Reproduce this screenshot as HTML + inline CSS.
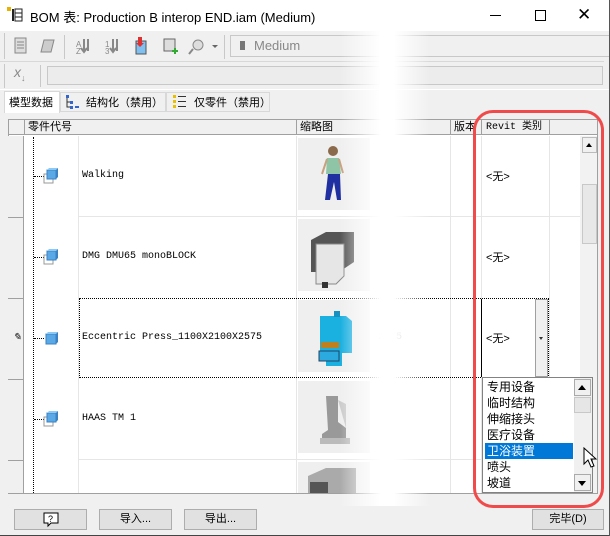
<!DOCTYPE html>
<html><head><meta charset="utf-8"><style>
*{margin:0;padding:0;box-sizing:border-box}
body{width:610px;height:536px;overflow:hidden;background:#f0f0f0;font-family:"Liberation Sans","Noto Sans CJK SC",sans-serif;font-size:12px;color:#000;position:relative}
.a{position:absolute}
.cjk{font-family:"Liberation Sans","Noto Sans CJK SC",sans-serif}
.mono{font-family:"Liberation Mono","Noto Sans CJK SC",monospace;font-size:10px}
.vl{position:absolute;width:1px;background:#e6e6e6}
.hl{position:absolute;height:1px;background:#e6e6e6}
.rh{position:absolute;left:8px;width:16px;background:#f0f0f0;border-bottom:1px solid #a0a0a0;border-right:1px solid #a0a0a0}
.cube{position:absolute;width:14px;height:14px}
.dotv{position:absolute;border-left:1px dotted #000;width:0}
.doth{position:absolute;border-top:1px dotted #000;height:0}
.btn{position:absolute;background:#e1e1e1;border:1px solid #adadad;text-align:center;font-size:11px;line-height:18px}
.th{position:absolute;background:#efefef;width:72px;height:72px}
.li{position:absolute;left:485px;width:88px;height:16px;font-size:12px;line-height:16px;padding-left:2px}
</style></head><body>
<!-- title -->
<div class="a" style="left:0;top:0;width:610px;height:31px;background:#fff"></div>
<svg class="a" style="left:7px;top:7px" width="16" height="16"><rect x="0" y="0" width="4" height="4" fill="#e8b000"/><rect x="5" y="2" width="2" height="12" fill="#222"/><rect x="8" y="2" width="7" height="12" fill="none" stroke="#222"/><line x1="8" y1="6" x2="15" y2="6" stroke="#222"/><line x1="8" y1="10" x2="15" y2="10" stroke="#222"/></svg>
<div class="a cjk" style="left:30px;top:7px;font-size:13px;color:#000">BOM 表: Production B interop END.iam (Medium)</div>
<div class="a" style="left:490px;top:15px;width:11px;height:1px;background:#000"></div>
<div class="a" style="left:535px;top:10px;width:11px;height:11px;border:1px solid #000"></div>
<div class="a" style="left:577px;top:6px;font-size:17px;line-height:18px;font-weight:300">✕</div>
<!-- toolbar 1 -->
<div class="a" style="left:4px;top:33px;width:1px;height:26px;background:#c8c8c8"></div>
<svg class="a" style="left:14px;top:37px" width="200" height="20">
<rect x="1" y="1" width="11" height="15" fill="#ddd" stroke="#888"/><line x1="3" y1="5" x2="10" y2="5" stroke="#888"/><line x1="3" y1="8" x2="10" y2="8" stroke="#888"/><line x1="3" y1="11" x2="10" y2="11" stroke="#888"/>
<path d="M30 3 L40 3 L37 15 L27 15Z" fill="#ccc" stroke="#888"/>
<text x="62" y="10" font-size="8" fill="#888">A</text><text x="62" y="17" font-size="8" fill="#888">Z</text><path d="M70 2v12M67 11l3 4 3-4M74 2v12" stroke="#888" fill="none" stroke-width="2"/>
<text x="91" y="10" font-size="8" fill="#888">1</text><text x="91" y="17" font-size="8" fill="#888">3</text><path d="M99 2v12M96 11l3 4 3-4M103 2v12" stroke="#888" fill="none" stroke-width="2"/>
<rect x="122" y="4" width="10" height="13" fill="#7fc0f0" stroke="#555"/><path d="M124 0 v6 h-2 l4 4 4-4 h-2 v-6z" fill="#e03030"/>
<rect x="150" y="2" width="11" height="12" fill="#ddd" stroke="#666"/><path d="M158 14h6M161 11v6" stroke="#3a3" stroke-width="2"/>
<circle cx="184" cy="8" r="5" fill="#ddd" stroke="#888"/><path d="M179 12l-4 5" stroke="#888" stroke-width="2"/>
</svg>
<div class="a" style="left:64px;top:35px;width:1px;height:24px;background:#c8c8c8"></div>
<div class="a" style="left:212px;top:45px;border:3px solid transparent;border-top:3px solid #666"></div>
<div class="a" style="left:224px;top:35px;width:1px;height:24px;background:#c8c8c8"></div>
<div class="a" style="left:230px;top:35px;width:380px;height:22px;border:1px solid #c8c8c8;background:#f0f0f0"></div>
<div class="a" style="left:240px;top:41px;width:5px;height:9px;background:#777"></div>
<div class="a" style="left:254px;top:38px;font-size:13px;color:#888">Medium</div>
<div class="a" style="left:0;top:61px;width:604px;height:1px;background:#d8d8d8"></div>
<!-- toolbar 2 -->
<div class="a" style="left:4px;top:64px;width:1px;height:24px;background:#c8c8c8"></div>
<div class="a" style="left:14px;top:64px;font-size:14px;color:#888;font-style:italic">x<sub style="font-size:9px">↓</sub></div>
<div class="a" style="left:40px;top:65px;width:1px;height:22px;background:#c8c8c8"></div>
<div class="a" style="left:47px;top:66px;width:556px;height:19px;border:1px solid #c8c8c8;background:#ececec"></div>
<div class="a" style="left:0;top:89px;width:610px;height:1px;background:#fff"></div>
<!-- tabs -->
<div class="a" style="left:4px;top:91px;width:56px;height:22px;background:#fff;border:1px solid #d8d8d8;border-bottom:none"></div>
<div class="a cjk" style="left:9px;top:94px;font-size:11px">模型数据</div>
<div class="a" style="left:60px;top:92px;width:106px;height:20px;border:1px solid #d8d8d8"></div>
<svg class="a" style="left:66px;top:95px" width="14" height="14"><rect x="0" y="0" width="3" height="3" fill="#36c"/><rect x="4" y="6" width="3" height="3" fill="#36c"/><rect x="4" y="11" width="3" height="3" fill="#36c"/><rect x="9" y="11" width="4" height="2" fill="#36c"/><path d="M1 3v9h3M1 7h3" stroke="#333" fill="none"/></svg>
<div class="a cjk" style="left:86px;top:94px;font-size:11px">结构化（禁用）</div>
<div class="a" style="left:166px;top:92px;width:104px;height:20px;border:1px solid #d8d8d8"></div>
<svg class="a" style="left:173px;top:95px" width="14" height="14"><rect x="0" y="0" width="3" height="3" fill="#e8c000"/><rect x="0" y="5" width="3" height="3" fill="#e8c000"/><rect x="0" y="10" width="3" height="3" fill="#e8c000"/><path d="M5 1.5h8M5 6.5h8M5 11.5h8" stroke="#333"/></svg>
<div class="a cjk" style="left:194px;top:94px;font-size:11px">仅零件（禁用）</div>
<!-- grid -->
<div class="a" style="left:8px;top:119px;width:590px;height:375px;background:#fff;border:1px solid #a0a0a0"></div>
<div class="a" style="left:9px;top:120px;width:588px;height:15px;background:#f0f0f0;border-bottom:1px solid #a0a0a0"></div>
<div class="a" style="left:24px;top:120px;width:1px;height:15px;background:#a0a0a0"></div>
<div class="a" style="left:296px;top:120px;width:1px;height:15px;background:#a0a0a0"></div>
<div class="a" style="left:450px;top:120px;width:1px;height:15px;background:#a0a0a0"></div>
<div class="a" style="left:481px;top:120px;width:1px;height:15px;background:#a0a0a0"></div>
<div class="a" style="left:549px;top:120px;width:1px;height:15px;background:#a0a0a0"></div>
<div class="a cjk" style="left:28px;top:120px;font-size:11px;line-height:14px">零件代号</div>
<div class="a cjk" style="left:300px;top:120px;font-size:11px;line-height:14px">缩略图</div>
<div class="a cjk" style="left:454px;top:120px;font-size:11px;line-height:14px">版本</div>
<div class="a mono" style="left:486px;top:121px;font-size:10px;line-height:14px">Revit 类别</div>
<!-- row headers -->
<div class="rh" style="top:136px;height:82px"></div>
<div class="rh" style="top:218px;height:81px"></div>
<div class="rh" style="top:299px;height:81px"></div>
<div class="rh" style="top:380px;height:81px"></div>
<div class="rh" style="top:461px;height:32px;border-bottom:none"></div>
<div class="a" style="left:13px;top:332px;font-size:10px;font-style:italic">✎</div>
<!-- column lines -->
<div class="vl" style="left:78px;top:136px;height:357px"></div>
<div class="vl" style="left:296px;top:136px;height:357px"></div>
<div class="vl" style="left:450px;top:136px;height:357px"></div>
<div class="vl" style="left:481px;top:136px;height:357px"></div>
<div class="vl" style="left:549px;top:136px;height:357px"></div>
<div class="hl" style="left:78px;top:216px;width:502px"></div>
<div class="hl" style="left:78px;top:459px;width:502px"></div>
<!-- tree -->
<div class="dotv" style="left:33px;top:137px;height:356px"></div>
<div class="doth" style="left:34px;top:176px;width:10px"></div>
<div class="doth" style="left:34px;top:257px;width:10px"></div>
<div class="doth" style="left:34px;top:338px;width:10px"></div>
<div class="doth" style="left:34px;top:419px;width:10px"></div>
<svg class="a" style="left:42px;top:168px" width="20" height="300">
<defs><g id="c"><path d="M2 6h9v9h-9z" fill="#fff" stroke="#999"/><path d="M5 2h9v9h-9z" fill="#5aa9e6" stroke="#3b82c4"/><path d="M5 2l2-2h9l-2 2z" fill="#8ccaf5"/><path d="M14 2l2-2v9l-2 2z" fill="#3b82c4"/></g></defs>
<use href="#c" x="0" y="0"/><use href="#c" x="0" y="81"/>
<g transform="translate(0,162)"><path d="M4 4h10v10h-10z" fill="#5aa9e6" stroke="#3b82c4"/><path d="M4 4l2-2h10l-2 2z" fill="#8ccaf5"/><path d="M14 4l2-2v10l-2 2z" fill="#3b82c4"/></g>
<use href="#c" x="0" y="243"/>
<rect x="8" y="324" width="8" height="3" fill="#5aa9e6"/>
</svg>
<div class="a mono" style="left:82px;top:170px;font-size:10px">Walking</div>
<div class="a mono" style="left:82px;top:251px;font-size:10px">DMG DMU65 monoBLOCK</div>
<div class="a mono" style="left:82px;top:332px;font-size:10px">Eccentric Press_1100X2100X2575</div>
<div class="a mono" style="left:82px;top:413px;font-size:10px">HAAS TM 1</div>
<!-- edit row -->
<div class="a" style="left:79px;top:298px;width:470px;height:80px;border:1px dotted #000"></div>
<div class="a" style="left:481px;top:299px;width:55px;height:78px;border-left:1px solid #000"></div>
<div class="a" style="left:535px;top:299px;width:13px;height:78px;background:#f0f0f0;border:1px solid #a0a0a0"></div>
<div class="a" style="left:539px;top:337px;border:2.5px solid transparent;border-top:3px solid #333"></div>
<!-- thumbs -->
<div class="th" style="left:298px;top:138px"></div>
<svg class="a" style="left:318px;top:144px" width="30" height="60"><circle cx="15" cy="7" r="5" fill="#8a6a4a"/><path d="M9 14h12l2 16h-15z" fill="#8fc4a6"/><path d="M10 30l-3 26h5l4-18 3 18h4l-1-26z" fill="#2030a0"/><path d="M9 15l-5 15M21 15l4 14" stroke="#c9a080" stroke-width="2"/></svg>
<div class="th" style="left:298px;top:219px"></div>
<svg class="a" style="left:306px;top:230px" width="55" height="60"><path d="M5 10l15-8h28v30l-15 10h-28z" fill="#555"/><path d="M10 14h28v32l-8 8h-20z" fill="#e6e6e6" stroke="#888"/><rect x="16" y="52" width="6" height="6" fill="#333"/></svg>
<div class="th" style="left:298px;top:300px"></div>
<svg class="a" style="left:314px;top:306px" width="50" height="60"><path d="M6 10h26l6 5v32h-10v14h-16v-14h-6z" fill="#1ab0e0"/><rect x="20" y="5" width="6" height="6" fill="#1890c0"/><rect x="7" y="36" width="18" height="6" fill="#c08020"/><rect x="5" y="45" width="20" height="10" fill="#2aaadf" stroke="#246"/></svg>
<div class="th" style="left:298px;top:381px"></div>
<svg class="a" style="left:318px;top:390px" width="40" height="60"><path d="M8 6h12v26l8 6v14h-24v-8l6-4z" fill="#999"/><path d="M20 10l8 4v24z" fill="#ccc"/><rect x="2" y="48" width="30" height="6" fill="#bbb"/></svg>
<div class="th" style="left:298px;top:462px;height:31px"></div>
<svg class="a" style="left:304px;top:466px" width="60" height="27"><path d="M4 10l18-8h30v25h-48z" fill="#aaa"/><rect x="6" y="16" width="18" height="11" fill="#555"/></svg>
<!-- revit values -->
<div class="a cjk" style="left:486px;top:168px;font-size:11px">&lt;无&gt;</div>
<div class="a cjk" style="left:486px;top:249px;font-size:11px">&lt;无&gt;</div>
<div class="a cjk" style="left:486px;top:330px;font-size:11px">&lt;无&gt;</div>
<div class="a mono" style="left:378px;top:332px;font-size:10px;color:#999">2575</div>
<!-- scrollbar -->
<div class="a" style="left:580px;top:136px;width:17px;height:357px;background:#f2f2f2"></div>
<div class="a" style="left:582px;top:137px;width:15px;height:16px;background:#f0f0f0;border:1px solid #bbb"></div>
<div class="a" style="left:586px;top:143px;border:3.5px solid transparent;border-bottom:4px solid #000;border-top:none"></div>
<div class="a" style="left:582px;top:184px;width:15px;height:60px;background:#e8e8e8;border:1px solid #c8c8c8"></div>
<!-- fade band -->
<div class="a" style="left:340px;top:31px;width:90px;height:475px;background:linear-gradient(90deg,rgba(255,255,255,0),#fff 45%,#fff 60%,rgba(255,255,255,0))"></div>
<!-- dropdown list -->
<div class="a" style="left:482px;top:377px;width:111px;height:116px;background:#fff;border:1px solid #828282"></div>
<div class="li cjk" style="top:379px">专用设备</div>
<div class="li cjk" style="top:395px">临时结构</div>
<div class="li cjk" style="top:411px">伸缩接头</div>
<div class="li cjk" style="top:427px">医疗设备</div>
<div class="li cjk" style="top:443px;background:#0078d7;color:#fff">卫浴装置</div>
<div class="li cjk" style="top:459px">喷头</div>
<div class="li cjk" style="top:475px">坡道</div>
<div class="a" style="left:574px;top:378px;width:18px;height:114px;background:#f0f0f0"></div>
<div class="a" style="left:574px;top:379px;width:17px;height:17px;background:#f0f0f0;border:1px solid #aaa"></div>
<div class="a" style="left:578px;top:385px;border:4px solid transparent;border-bottom:5px solid #000;border-top:none"></div>
<div class="a" style="left:574px;top:397px;width:17px;height:16px;background:#e6e6e6;border:1px solid #c8c8c8"></div>
<div class="a" style="left:574px;top:474px;width:17px;height:17px;background:#f0f0f0;border:1px solid #aaa"></div>
<div class="a" style="left:578px;top:481px;border:4px solid transparent;border-top:5px solid #000;border-bottom:none"></div>
<svg class="a" style="left:582px;top:447px" width="16" height="22"><path d="M2 1v16l4-4 3 7 3-1-3-7h5z" fill="#fff" stroke="#000"/></svg>
<!-- red highlight -->
<div class="a" style="left:473px;top:110px;width:131px;height:398px;border:3px solid #f04a4a;border-radius:20px"></div>
<!-- bottom -->
<div class="btn" style="left:14px;top:509px;width:73px;height:21px"><svg width="16" height="16" style="margin-top:2px"><path d="M1 1h14v10h-7l-3 3v-3h-4z" fill="#fff" stroke="#000"/><text x="5" y="10" font-size="9">?</text></svg></div>
<div class="btn cjk" style="left:99px;top:509px;width:73px;height:21px">导入...</div>
<div class="btn cjk" style="left:184px;top:509px;width:73px;height:21px">导出...</div>
<div class="btn cjk" style="left:532px;top:509px;width:72px;height:21px">完毕(D)</div>
<div class="a" style="left:0;top:535px;width:610px;height:1px;background:#444"></div>
<div class="a" style="left:609px;top:0;width:1px;height:536px;background:#555"></div>
</body></html>
